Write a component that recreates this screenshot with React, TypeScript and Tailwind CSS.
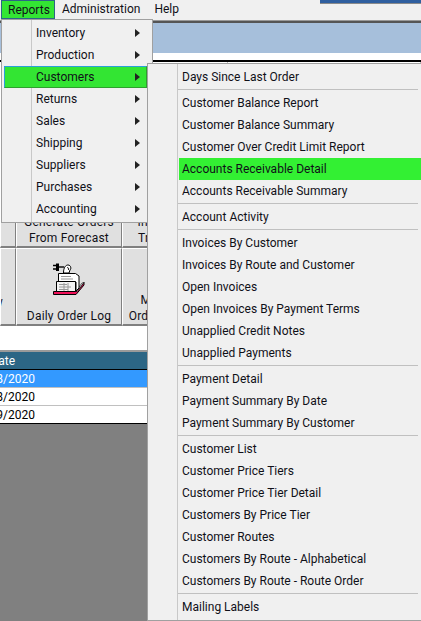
import { Fragment } from "react";

const mainItems = ["Inventory", "Production", "Customers", "Returns", "Sales", "Shipping", "Suppliers", "Purchases", "Accounting"];

const subGroups = [
  ["Days Since Last Order"],
  ["Customer Balance Report", "Customer Balance Summary", "Customer Over Credit Limit Report", "Accounts Receivable Detail", "Accounts Receivable Summary"],
  ["Account Activity"],
  ["Invoices By Customer", "Invoices By Route and Customer", "Open Invoices", "Open Invoices By Payment Terms", "Unapplied Credit Notes", "Unapplied Payments"],
  ["Payment Detail", "Payment Summary By Date", "Payment Summary By Customer"],
  ["Customer List", "Customer Price Tiers", "Customer Price Tier Detail", "Customers By Price Tier", "Customer Routes", "Customers By Route - Alphabetical", "Customers By Route - Route Order"],
  ["Mailing Labels"],
];

const dates = ["03/18/2020", "03/18/2020", "03/19/2020"];

const tile = "border-t border-l border-t-white border-l-white border-r border-b-2 border-r-[#808080] border-b-[#808080] bg-[#e0e0e0] overflow-hidden";

function Arrow() {
  return (
    <svg width="5" height="8" viewBox="0 0 5 8" className="shrink-0">
      <path d="M0 0 L5 4 L0 8 Z" fill="#222" />
    </svg>
  );
}

function OrderLogIcon() {
  return (
    <svg width="32" height="33" viewBox="0 0 32 33" className="shrink-0">
      {/* tray */}
      <path d="M0.5 28.5 L24 28.5 L31 19.5 L31 22 L23 31.5 L0.5 31.5 Z" fill="#f0125a" stroke="#000" />
      <path d="M23 28 L29 20 L31 19.5 L24 28.5 Z" fill="#e7e7e7" stroke="#000" strokeWidth="0.6" />
      {/* sheet and roller */}
      <path d="M5.5 10.5 L22.5 10.5 L26 13 L26 25 L23 28 L23 19 L5.5 19 Z" fill="#fff" stroke="#000" />
      <path d="M8 13.5 L18 13.5 M8 16 L20 16" stroke="#9a9a9a" />
      {/* printer body */}
      <path d="M3.5 18.5 L22.5 18.5 L22.5 28.5 L3.5 28.5 Z" fill="#f3f3f3" stroke="#000" />
      <path d="M6 21.5 L14 21.5 M6 24 L18 24 M6 26.5 L15 26.5 M11 20 L11 28 M15 20 L15 28" stroke="#9a9a9a" />
      {/* paper curl and plug */}
      <path d="M10.5 10 C10.5 4 13 2 15 2 C18 2 18.5 6 17 7 L16 10 Z" fill="#fff" stroke="#000" />
      <path d="M14 5 C15 4 16 5 15.5 7" fill="none" stroke="#000" />
      <path d="M0 2.5 L3 2.5 M0 6 L3 6" stroke="#000" strokeWidth="1.4" />
      <path d="M3 0.5 L6 0.5 L6 8 L3 8 Z" fill="#000" />
      <path d="M6 4 L11 4" stroke="#000" strokeWidth="1.4" />
    </svg>
  );
}

export default function App() {
  return (
    <div className="relative flex flex-col w-[421px] h-[621px] overflow-hidden bg-white text-[12px] leading-[22px] text-[#101018] font-['Roboto',sans-serif]">
      {/* Menu bar */}
      <header className="flex shrink-0 h-[20px] bg-[#f0f0f0]">
        <span className="ml-[1px] h-[19px] w-[54px] pl-[6px] bg-[#33e533] border border-[#2c6685] leading-[18px]">Reports</span>
        <span className="ml-[7px] leading-[19px]">Administration</span>
        <span className="ml-[14px] leading-[19px]">Help</span>
        <div className="ml-auto h-[4px] w-[101px] bg-[#2f5f9f] border-b border-[#8a8a8a]" />
      </header>
      <div className="shrink-0 h-[3px] bg-[#555] border-t border-[#999]" />

      {/* Title band */}
      <div className="shrink-0 h-[30px] bg-[#a6bfdb]" />
      <div className="shrink-0 h-[7px] bg-white" />
      <div className="shrink-0 h-[2px] bg-black" />

      {/* Button rows */}
      <div className="shrink-0 grid grid-cols-[16px_106px_106px_1fr] grid-rows-[186px_78px] leading-[16px] text-center tracking-[0.2px]">
        <div className={tile} />
        <div className={`${tile} flex flex-col justify-end`}>
          <span>Generate Orders</span>
          <span>From Forecast</span>
        </div>
        <div className={`${tile} flex flex-col justify-end`}>
          <span>Inventory Use</span>
          <span>Transfer Item</span>
        </div>
        <div className={tile} />

        <div className={`${tile} flex flex-col justify-end pb-[14px] items-end`}>
          <span className="mr-[12px] whitespace-nowrap">Overview</span>
        </div>
        <div className={`${tile} flex flex-col items-center pt-[14px]`}>
          <OrderLogIcon />
          <span className="mt-auto">Daily Order Log</span>
        </div>
        <div className={`${tile} flex flex-col justify-end`}>
          <span className="whitespace-nowrap">Month Sales</span>
          <span className="whitespace-nowrap">Orders Summary</span>
        </div>
        <div className={tile} />
      </div>
      <div className="shrink-0 h-[24px] bg-white" />

      {/* Order table */}
      <div className="shrink-0 border-t-2 border-[#9a9a9a]">
        <div className="h-[18px] bg-[#2c6685] border-b border-black text-white leading-[18px] flex overflow-hidden">
          <div className="w-[15px] flex justify-end shrink-0">
            <span>Date</span>
          </div>
        </div>
        {dates.map((d, i) => (
          <div
            key={i}
            className={`h-[18px] flex overflow-hidden leading-[18px] border-b ${
              i === 2 ? "border-black" : "border-[#c0c0c0]"
            } ${i === 0 ? "bg-[#3399ff] text-white" : "bg-white text-black"}`}
          >
            <div className="w-[35px] flex justify-end shrink-0">
              <span>{d}</span>
            </div>
          </div>
        ))}
      </div>
      <div className="flex-1 bg-[#808080]" />

      {/* Reports dropdown */}
      <div className="absolute left-[1px] top-[19px] w-[152px] border border-[#a0a0a0] bg-[#f0f0f0] py-[2px] pl-[2px] pr-[5px]">
        <div className="absolute left-[29px] top-0 bottom-0 w-px bg-[#c8c8c8]" />
        {mainItems.map((item) =>
          item === "Customers" ? (
            <div
              key={item}
              className="relative flex h-[22px] items-center pl-[31px] pr-[6px] bg-[#33e533] border border-t-[#2ba0d8] border-l-[#2ba0d8] border-r-[#2ea02e] border-b-[#2ea02e]"
            >
              <span className="flex-1">{item}</span>
              <Arrow />
            </div>
          ) : (
            <div key={item} className="relative flex h-[22px] items-center pl-[32px] pr-[7px]">
              <span className="flex-1">{item}</span>
              <Arrow />
            </div>
          )
        )}
      </div>

      {/* Customers submenu */}
      <div className="absolute left-[147px] top-[63px] w-[290px] border border-[#a0a0a0] bg-[#f0f0f0] py-[2px] pl-[1px]">
        <div className="absolute left-[29px] top-0 bottom-0 w-px bg-[#c8c8c8]" />
        {subGroups.map((group, gi) => (
          <Fragment key={gi}>
            {gi > 0 && (
              <div className="h-[4px] pt-px pl-[29px]">
                <div className="h-px bg-[#c0c0c0] w-[240px]" />
              </div>
            )}
            {group.map((item) =>
              item === "Accounts Receivable Detail" ? (
                <div key={item} className="relative h-[22px] ml-[30px] pl-[3px] bg-[#33f033] whitespace-nowrap">
                  {item}
                </div>
              ) : (
                <div key={item} className="relative h-[22px] pl-[33px] whitespace-nowrap">
                  {item}
                </div>
              )
            )}
          </Fragment>
        ))}
      </div>
    </div>
  );
}
